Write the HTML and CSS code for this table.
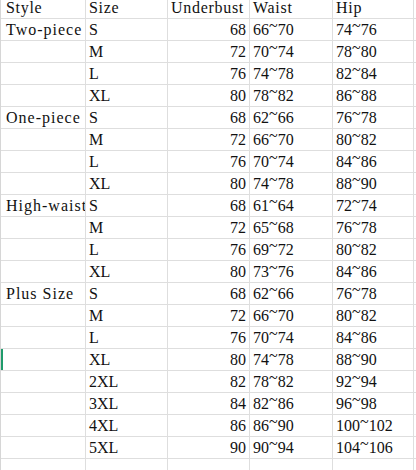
FILE: index.html
```html
<!DOCTYPE html>
<html lang="en">
<head>
    <title>Size chart</title>
    <meta charset="UTF-8">
    <link rel="stylesheet" href="styles.css">
</head>
<body>
<div class="sheet">
    <table class="grid">
        <colgroup>
            <col class="c-style">
            <col class="c-size">
            <col class="c-num">
            <col class="c-waist">
            <col class="c-hip">
            <col>
        </colgroup>
        <tbody>
        <tr class="head">
            <td>Style</td><td>Size</td><td>Underbust</td><td>Waist</td><td>Hip</td><td></td>
        </tr>
        <!-- Two-piece -->
        <tr><td>Two-piece</td><td>S</td><td class="num">68</td><td>66<span class="tl">~</span>70</td><td>74<span class="tl">~</span>76</td><td></td></tr>
        <tr><td></td><td>M</td><td class="num">72</td><td>70<span class="tl">~</span>74</td><td>78<span class="tl">~</span>80</td><td></td></tr>
        <tr><td></td><td>L</td><td class="num">76</td><td>74<span class="tl">~</span>78</td><td>82<span class="tl">~</span>84</td><td></td></tr>
        <tr><td></td><td>XL</td><td class="num">80</td><td>78<span class="tl">~</span>82</td><td>86<span class="tl">~</span>88</td><td></td></tr>
        <!-- One-piece -->
        <tr><td>One-piece</td><td>S</td><td class="num">68</td><td>62<span class="tl">~</span>66</td><td>76<span class="tl">~</span>78</td><td></td></tr>
        <tr><td></td><td>M</td><td class="num">72</td><td>66<span class="tl">~</span>70</td><td>80<span class="tl">~</span>82</td><td></td></tr>
        <tr><td></td><td>L</td><td class="num">76</td><td>70<span class="tl">~</span>74</td><td>84<span class="tl">~</span>86</td><td></td></tr>
        <tr><td></td><td>XL</td><td class="num">80</td><td>74<span class="tl">~</span>78</td><td>88<span class="tl">~</span>90</td><td></td></tr>
        <!-- High-waist -->
        <tr><td>High-waist</td><td>S</td><td class="num">68</td><td>61<span class="tl">~</span>64</td><td>72<span class="tl">~</span>74</td><td></td></tr>
        <tr><td></td><td>M</td><td class="num">72</td><td>65<span class="tl">~</span>68</td><td>76<span class="tl">~</span>78</td><td></td></tr>
        <tr><td></td><td>L</td><td class="num">76</td><td>69<span class="tl">~</span>72</td><td>80<span class="tl">~</span>82</td><td></td></tr>
        <tr><td></td><td>XL</td><td class="num">80</td><td>73<span class="tl">~</span>76</td><td>84<span class="tl">~</span>86</td><td></td></tr>
        <!-- Plus Size -->
        <tr><td>Plus Size</td><td>S</td><td class="num">68</td><td>62<span class="tl">~</span>66</td><td>76<span class="tl">~</span>78</td><td></td></tr>
        <tr><td></td><td>M</td><td class="num">72</td><td>66<span class="tl">~</span>70</td><td>80<span class="tl">~</span>82</td><td></td></tr>
        <tr><td></td><td>L</td><td class="num">76</td><td>70<span class="tl">~</span>74</td><td>84<span class="tl">~</span>86</td><td></td></tr>
        <tr class="active"><td></td><td>XL</td><td class="num">80</td><td>74<span class="tl">~</span>78</td><td>88<span class="tl">~</span>90</td><td></td></tr>
        <tr><td></td><td>2XL</td><td class="num">82</td><td>78<span class="tl">~</span>82</td><td>92<span class="tl">~</span>94</td><td></td></tr>
        <tr><td></td><td>3XL</td><td class="num">84</td><td>82<span class="tl">~</span>86</td><td>96<span class="tl">~</span>98</td><td></td></tr>
        <tr><td></td><td>4XL</td><td class="num">86</td><td>86<span class="tl">~</span>90</td><td>100<span class="tl">~</span>102</td><td></td></tr>
        <tr><td></td><td>5XL</td><td class="num">90</td><td>90<span class="tl">~</span>94</td><td>104<span class="tl">~</span>106</td><td></td></tr>
        <tr class="blank"><td></td><td></td><td></td><td></td><td></td><td></td></tr>
        </tbody>
    </table>
</div>
</body>
</html>
```

FILE: styles.css
```css
html, body { margin: 0; padding: 0; background: #fff; overflow: hidden; }
body { width: 416px; height: 470px; }
.sheet { border-left: 1px solid #d6d6d6; height: 100%; overflow: hidden; }
.grid { border-collapse: separate; border-spacing: 0; table-layout: fixed; width: 460px; font-family: "Liberation Serif", "Times New Roman", serif; font-size: 16px; color: #111; }
.c-style { width: 85px; }
.c-size { width: 82px; }
.c-num { width: 82px; }
.c-waist { width: 83px; }
.c-hip { width: 81px; }
.grid tr { height: 22px; }
.grid tr.head { height: 18px; }
.grid tr.blank { height: 13px; }
.grid td { box-sizing: border-box; padding: 0 3px 2px 3px; border-right: 1px solid #dedede; border-bottom: 1px solid #dedede; vertical-align: bottom; line-height: 16px; white-space: nowrap; }
.grid tr.head td { letter-spacing: 0.7px; }
.grid td:first-child { padding-left: 5px; letter-spacing: 1px; overflow: hidden; }
.grid td.num { text-align: right; padding-right: 3px; }
.grid tr.active td:first-child { box-shadow: inset 2px 0 #1f9b6b; }
.tl { vertical-align: 4px; line-height: 0; }
```
